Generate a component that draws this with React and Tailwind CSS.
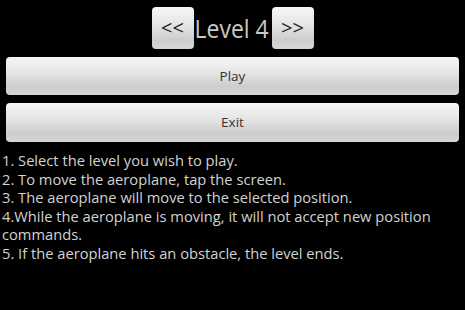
import React, { useState } from "react";

const grad =
  "bg-[linear-gradient(to_bottom,#f6f6f6_0%,#e6e6e6_40%,#cdcdcd_78%,#d6d6d6_100%)]";

const rules = [
  "1. Select the level you wish to play.",
  "2. To move the aeroplane, tap the screen.",
  "3. The aeroplane will move to the selected position.",
  "4.While the aeroplane is moving, it will not accept new position commands.",
  "5. If the aeroplane hits an obstacle, the level ends.",
];

const App = () => {
  const [level, setLevel] = useState(4);

  return (
    <div className="w-[465px] h-[310px] bg-black overflow-hidden font-['Open_Sans',sans-serif]">
      {/* level picker */}
      <div className="flex items-center justify-center pt-[7px]">
        <button
          onClick={() => setLevel((l) => Math.max(1, l - 1))}
          className={`w-[42px] h-[42px] rounded-[4px] ${grad} text-[#222] text-[20px] leading-none flex items-center justify-center`}
        >
          &lt;&lt;
        </button>
        <div className="w-[78px] pl-[1px] text-[#c9c9c9] text-[23px] leading-none scale-y-[1.08]">
          Level {level}
        </div>
        <button
          onClick={() => setLevel((l) => l + 1)}
          className={`w-[42px] h-[42px] rounded-[4px] ${grad} text-[#222] text-[20px] leading-none flex items-center justify-center`}
        >
          &gt;&gt;
        </button>
      </div>

      {/* main buttons */}
      <div className="flex flex-col gap-[8px] px-[6px] mt-[8px]">
        <button className={`h-[38px] rounded-[4px] ${grad} text-[#333] text-[13.5px]`}>
          Play
        </button>
        <button className={`h-[39px] rounded-[4px] ${grad} text-[#333] text-[13.5px]`}>
          Exit
        </button>
      </div>

      {/* instructions */}
      <div className="mt-[9px] pl-[2px] pr-[20px] text-[#d2d2d2] text-[14.7px] leading-[18.5px]">
        {rules.map((r) => (
          <p key={r}>{r}</p>
        ))}
      </div>
    </div>
  );
};

export default App;
